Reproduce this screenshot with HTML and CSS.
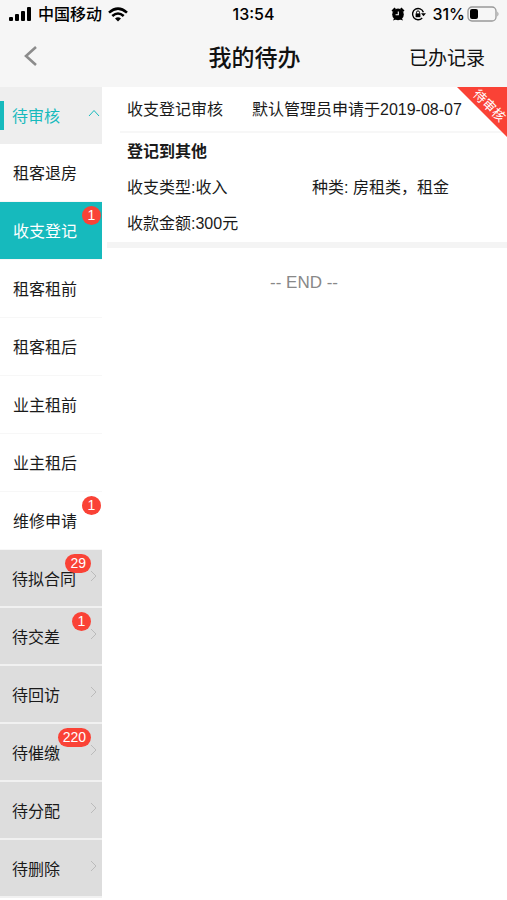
FILE: index.html
```html
<!DOCTYPE html>
<html lang="zh-CN">
<head>
    <meta charset="UTF-8">
    <meta name="viewport" content="width=device-width, initial-scale=1.0">
    <title>我的待办</title>
    <link rel="stylesheet" href="styles.css">
</head>
<body>

    <div class="status-bar">
        <div class="status-left">
            <svg class="signal" width="24" height="14" viewBox="0 0 24 14">
                <rect x="1" y="10" width="4" height="4" rx="1"/>
                <rect x="7" y="7" width="4" height="7" rx="1"/>
                <rect x="13" y="4" width="4" height="10" rx="1"/>
                <rect x="19" y="0" width="4" height="14" rx="1"/>
            </svg>
            <span class="carrier">中国移动</span>
            <svg class="wifi" width="20" height="15" viewBox="0 0 20 15" fill="none" stroke="#000" stroke-width="2.6">
                <path d="M1 5.6Q10 -2.4 19 5.6"/>
                <path d="M4.3 9Q10 4 15.7 9"/>
                <path d="M7 11.4Q10 9 13 11.4L10 14.6Z" fill="#000" stroke="none"/>
            </svg>
        </div>
        <span class="time">13:54</span>
        <div class="status-right">
            <svg width="14" height="14" viewBox="0 0 14 14">
                <path d="M0.5 3.5L3.5 0.5L5 2L2 5ZM13.5 3.5L10.5 0.5L9 2L12 5ZM2 13.6L3.2 11L5 12.5ZM12 13.6L10.8 11L9 12.5Z"/>
                <circle cx="7" cy="7.4" r="5.8"/>
                <path d="M7.3 4.5V7.8H4.6" fill="none" stroke="#fff" stroke-width="1.1"/>
            </svg>
            <svg width="15" height="14" viewBox="0 0 15 14">
                <path d="M12.4 5.2A5.6 5.6 0 1 0 11.2 11" fill="none" stroke="#000" stroke-width="1.4"/>
                <path d="M10 6.2H15L12.5 9.2Z"/>
                <rect x="4.6" y="6.4" width="4.8" height="3.8"/>
                <path d="M5.5 6.6V5.4A1.5 1.5 0 0 1 8.5 5.4V6.6" fill="none" stroke="#000"/>
            </svg>
            <span class="percent">31%</span>
            <svg width="32" height="16" viewBox="0 0 32 16">
                <rect x="1" y="1" width="28" height="14" rx="4" fill="none" stroke="#999" stroke-width="1.3"/>
                <rect x="3" y="3" width="8" height="10" rx="2"/>
                <path d="M30.4 5.5Q32.6 8 30.4 10.5Z" fill="#999"/>
            </svg>
        </div>
    </div>

    <header class="header">
        <button class="back" type="button" aria-label="返回">
            <svg width="13" height="20" viewBox="0 0 13 20" fill="none" stroke="#8c8c8c" stroke-width="2.6">
                <path d="M12 1L2 10L12 19"/>
            </svg>
        </button>
        <h1>我的待办</h1>
        <button class="history" type="button">已办记录</button>
    </header>

    <div class="container">
        <nav class="sidebar">
            <button class="group open" type="button" aria-expanded="true">待审核
                <svg class="arrow-up" width="12" height="8" viewBox="0 0 12 8"><path d="M1 7L6 1.5L11 7"/></svg>
            </button>
            <button class="item" type="button">租客退房</button>
            <button class="item active" type="button">收支登记<span class="badge">1</span></button>
            <button class="item" type="button">租客租前</button>
            <button class="item" type="button">租客租后</button>
            <button class="item" type="button">业主租前</button>
            <button class="item" type="button">业主租后</button>
            <button class="item" type="button">维修申请<span class="badge">1</span></button>
            <button class="group" type="button">待拟合同<span class="badge">29</span>
                <svg class="arrow" width="7" height="12" viewBox="0 0 7 12"><path d="M1 1L6 6L1 11"/></svg>
            </button>
            <button class="group" type="button">待交差<span class="badge">1</span>
                <svg class="arrow" width="7" height="12" viewBox="0 0 7 12"><path d="M1 1L6 6L1 11"/></svg>
            </button>
            <button class="group" type="button">待回访
                <svg class="arrow" width="7" height="12" viewBox="0 0 7 12"><path d="M1 1L6 6L1 11"/></svg>
            </button>
            <button class="group" type="button">待催缴<span class="badge">220</span>
                <svg class="arrow" width="7" height="12" viewBox="0 0 7 12"><path d="M1 1L6 6L1 11"/></svg>
            </button>
            <button class="group" type="button">待分配
                <svg class="arrow" width="7" height="12" viewBox="0 0 7 12"><path d="M1 1L6 6L1 11"/></svg>
            </button>
            <button class="group" type="button">待删除
                <svg class="arrow" width="7" height="12" viewBox="0 0 7 12"><path d="M1 1L6 6L1 11"/></svg>
            </button>
        </nav>

        <main class="content">
            <article class="card">
                <div class="card-top">
                    <span>收支登记审核</span>
                    <span>默认管理员申请于2019-08-07</span>
                </div>
                <div class="card-body">
                    <h2>登记到其他</h2>
                    <div class="row">
                        <span>收支类型:收入</span>
                        <span>种类: 房租类，租金</span>
                    </div>
                    <div class="row">
                        <span>收款金额:300元</span>
                    </div>
                </div>
                <div class="ribbon"><span>待审核</span></div>
            </article>
            <p class="end">-- END --</p>
        </main>
    </div>

</body>
</html>
```
FILE: styles.css
```css
/* General Styles */
* {
    box-sizing: border-box;
}

body {
    font-family: "Liberation Sans", "Noto Sans CJK SC", sans-serif;
    font-size: 16px;
    color: #1a1a1a;
    background-color: #ffffff;
    margin: 0;
}

button {
    font: inherit;
    color: inherit;
    background: none;
    border: none;
    padding: 0;
    cursor: pointer;
}

svg {
    display: block;
    flex-shrink: 0;
}

/* Status bar */
.status-bar {
    display: grid;
    grid-template-columns: 1fr auto 1fr;
    align-items: center;
    height: 28px;
    padding: 0 8px;
    background-color: #f6f6f6;
    color: #000;
    font-family: Inter, "Noto Sans CJK SC", sans-serif;
    font-weight: 500;
    line-height: 28px;
}

.status-left,
.status-right {
    display: flex;
    align-items: center;
    gap: 6px;
}

.status-right {
    justify-content: flex-end;
}

.percent {
    margin-right: -4px;
}

/* Header */
.header {
    display: grid;
    grid-template-columns: 1fr auto 1fr;
    align-items: center;
    height: 59px;
    padding: 0 22px 3px 24px;
    background-color: #f6f6f6;
    color: #111;
}

.back {
    justify-self: start;
    padding: 4px 0;
}

.header h1 {
    margin: 0;
    font-size: 23px;
    font-weight: 500;
}

.history {
    justify-self: end;
    font-size: 19px;
}

/* Sidebar */
.container {
    display: flex;
}

.sidebar {
    display: flex;
    flex-direction: column;
    width: 102px;
    flex-shrink: 0;
}

.item,
.group {
    position: relative;
    display: flex;
    align-items: center;
    height: 58px;
    padding: 0 0 1px 13px;
    border-bottom: 1px solid #f7f7f7;
}

.group {
    justify-content: space-between;
    padding: 0 5px 0 12px;
    background-color: #dddddd;
    border-bottom: 2px solid #f1f1f1;
}

.group.open {
    height: 57px;
    padding: 0 2px 1px 12px;
    background-color: #eeeeee;
    border-bottom: none;
    color: #16babd;
}

.group.open::before {
    content: "";
    position: absolute;
    left: 0;
    top: 14px;
    width: 4px;
    height: 29px;
    background-color: #16babd;
}

.item.active {
    background-color: #16babd;
    color: #ffffff;
}

.arrow,
.arrow-up {
    fill: none;
    stroke: #bbbbbb;
    margin-bottom: 4px;
}

.arrow-up {
    stroke: #16babd;
}

.badge {
    position: absolute;
    top: 4px;
    right: 1px;
    min-width: 19px;
    height: 19px;
    padding: 0 5px;
    border-radius: 10px;
    background-color: #fa4236;
    color: #ffffff;
    font-size: 14px;
    line-height: 19px;
    text-align: center;
}

.group .badge {
    right: 11px;
}

/* Content */
.content {
    flex: 1;
    min-width: 0;
    padding-left: 5px;
}

.card {
    position: relative;
    border-bottom: 6px solid #f4f4f4;
    line-height: 24px;
}

.card-top {
    display: flex;
    gap: 29px;
    margin-left: 13px;
    padding: 11px 0 9px 7px;
    border-bottom: 2px solid #f7f7f7;
    white-space: nowrap;
}

.card-body {
    display: flex;
    flex-direction: column;
    gap: 12px;
    padding: 7px 10px 6px 20px;
}

.card h2 {
    margin: 0;
    font-size: 16px;
    font-weight: bold;
}

.row {
    display: grid;
    grid-template-columns: 1fr 1fr;
}

.ribbon {
    position: absolute;
    top: 0;
    right: 0;
    width: 50px;
    height: 50px;
    background-color: #fa4236;
    clip-path: polygon(0 0, 100% 0, 100% 100%);
    color: #ffffff;
    font-size: 13px;
    line-height: 16px;
}

.ribbon span {
    position: absolute;
    top: 11px;
    left: 12px;
    width: 40px;
    text-align: center;
    transform: rotate(45deg);
}

.end {
    margin: 25px 0;
    padding-right: 6px;
    color: #888888;
    font-size: 17px;
    line-height: 20px;
    text-align: center;
}
```
